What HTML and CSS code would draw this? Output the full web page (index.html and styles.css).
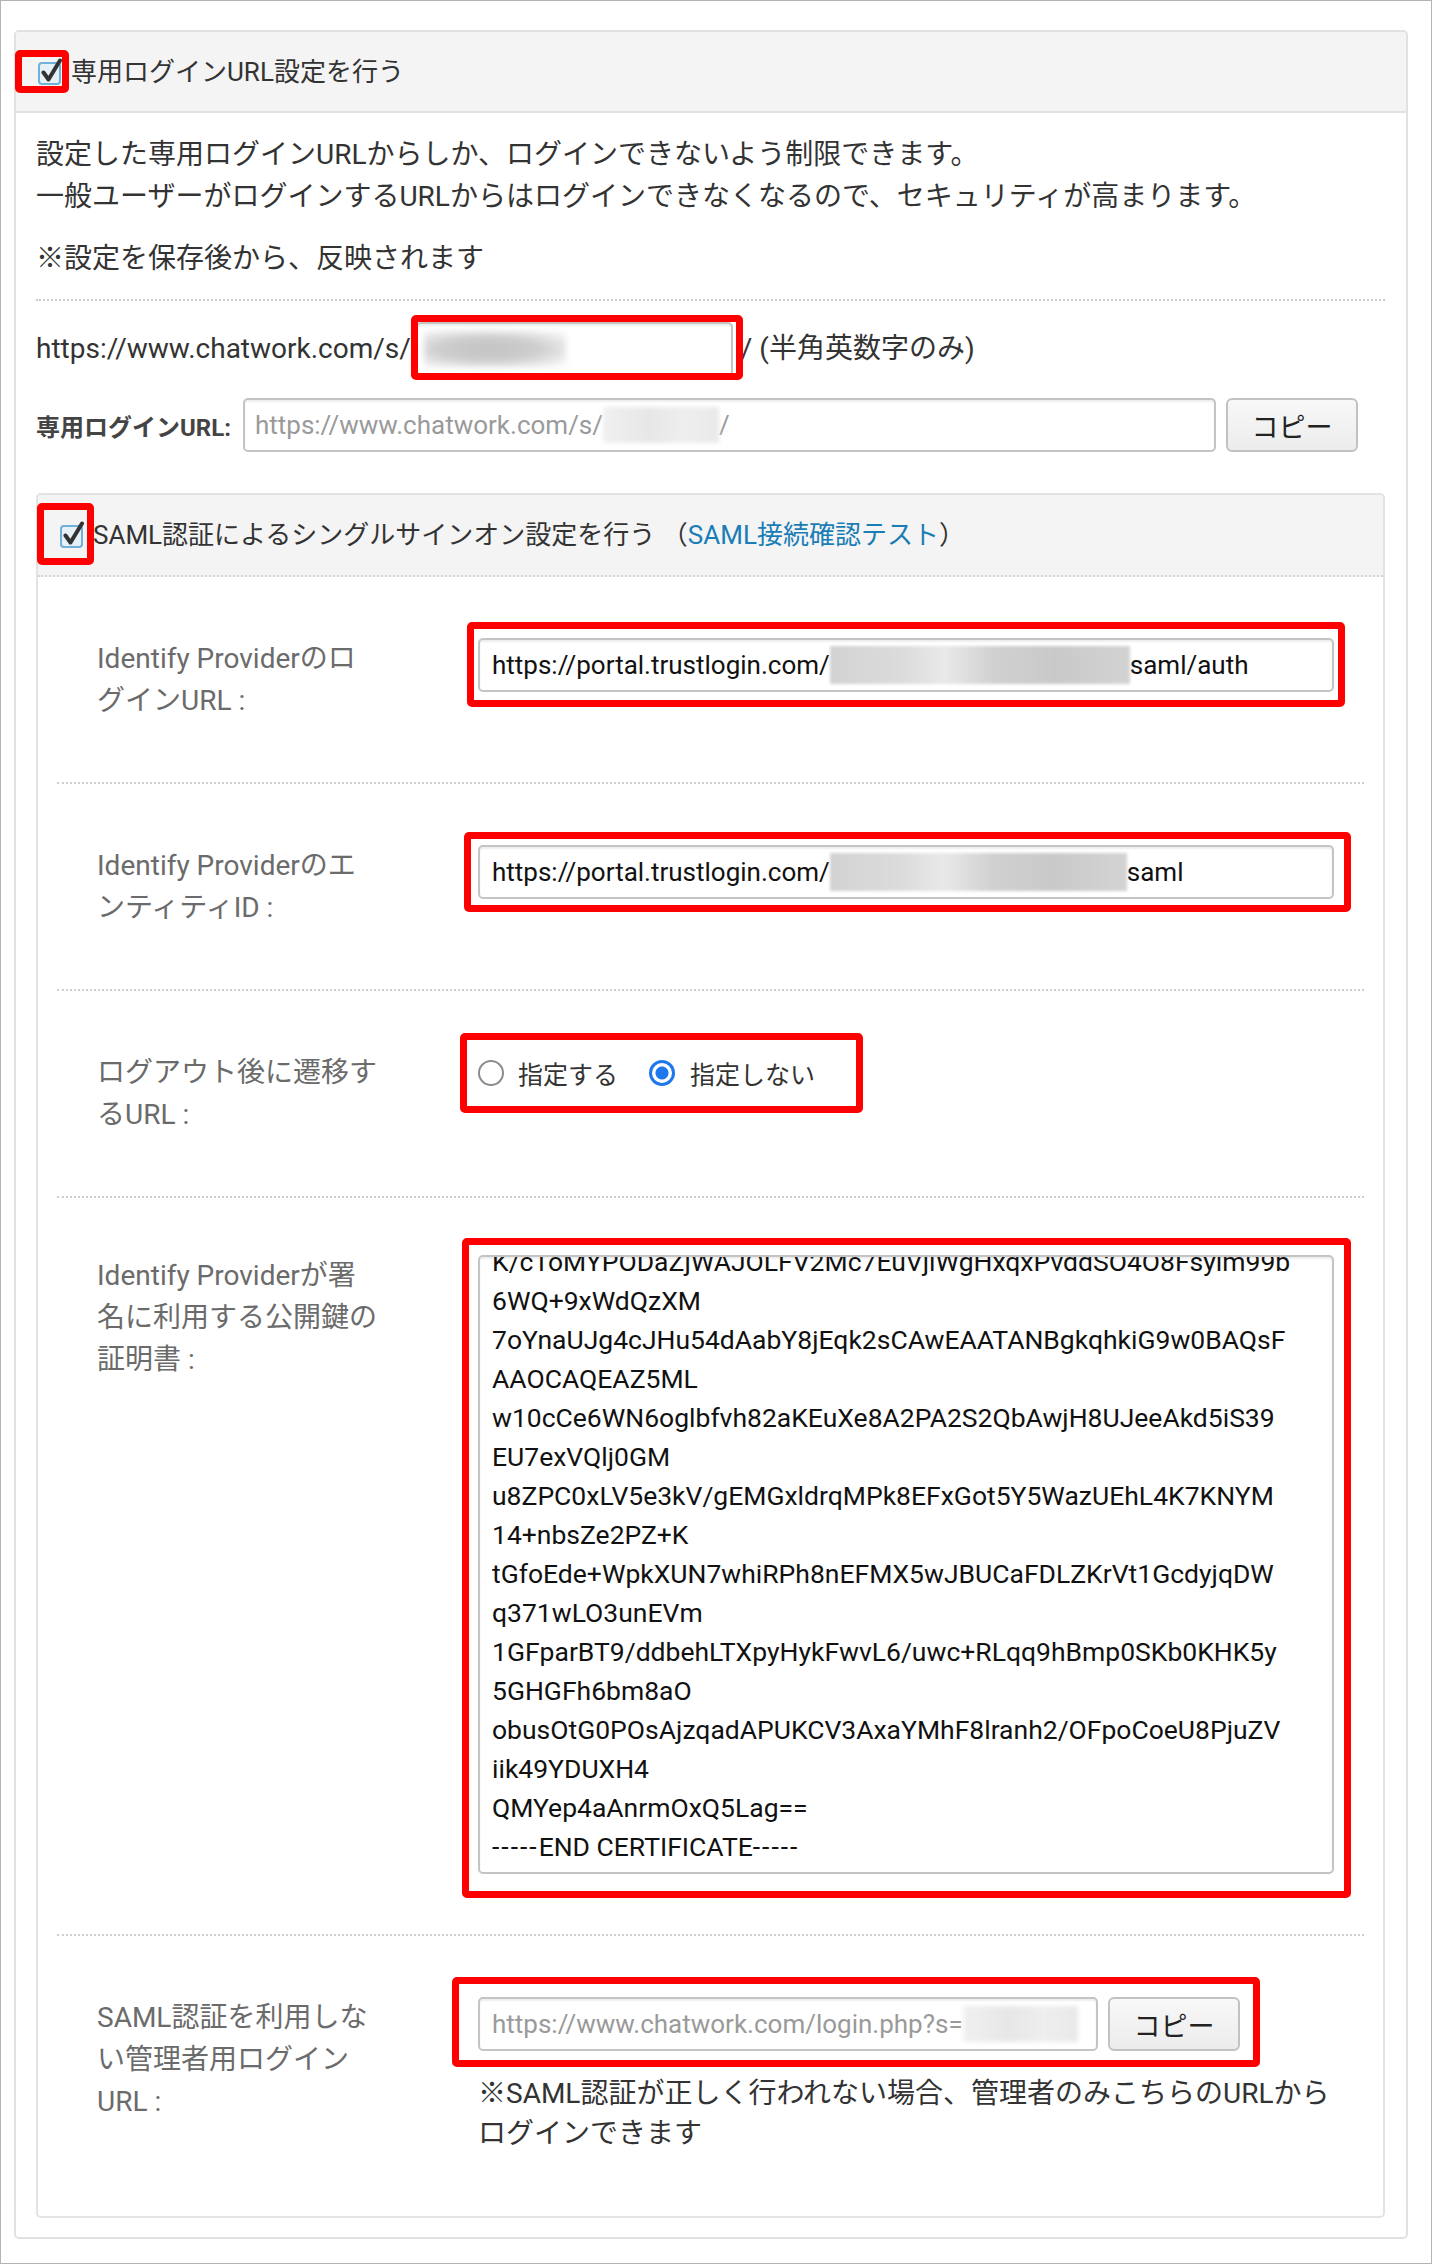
FILE: index.html
```
<html>
<head>
  <meta charset="utf-8">
  <title>専用ログインURL設定</title>
  <link rel="stylesheet" href="styles.css">
</head>
<body>

<div class="frame">
  <div class="panel">
    <div class="panel-head">
      <span class="mark mark-c1">
        <svg class="cb" viewBox="0 0 28 28" width="28" height="28">
          <rect x="3" y="5" width="21" height="21" rx="3" fill="#e6f0f7" stroke="#6fb1d9" stroke-width="2"/>
          <path d="M7.5 14.5 L12.5 21.5 L24 2.5" fill="none" stroke="#333" stroke-width="4" stroke-linecap="round" stroke-linejoin="round"/>
        </svg>
      </span>
      <span class="head-text">専用ログインURL設定を行う</span>
    </div>

    <div class="panel-body">
      <p class="desc">設定した専用ログインURLからしか、ログインできないよう制限できます。<br>一般ユーザーがログインするURLからはログインできなくなるので、セキュリティが高まります。</p>
      <p class="desc save-note">※設定を保存後から、反映されます</p>

      <div class="slug-row">
        <span>https://www.chatwork.com/s/</span>
        <div class="field slug mark mark-slug"><span class="blur blur-blob"></span></div>
        <span>/ (半角英数字のみ)</span>
      </div>

      <div class="url-row">
        <span class="url-label">専用ログインURL:</span>
        <div class="field muted">https://www.chatwork.com/s/<span class="blur blur-light w-slug"></span>/</div>
        <button class="copy-btn">コピー</button>
      </div>

      <!-- SAML -->
      <div class="saml">
        <div class="saml-head">
          <span class="mark mark-c2">
            <svg class="cb" viewBox="0 0 28 28" width="28" height="28">
              <rect x="3" y="5" width="21" height="21" rx="3" fill="#e6f0f7" stroke="#6fb1d9" stroke-width="2"/>
              <path d="M7.5 14.5 L12.5 21.5 L24 2.5" fill="none" stroke="#333" stroke-width="4" stroke-linecap="round" stroke-linejoin="round"/>
            </svg>
          </span>
          <span class="head-text">SAML認証によるシングルサインオン設定を行う （<a class="test-link" href="#">SAML接続確認テスト</a>）</span>
        </div>

        <div class="saml-body">
          <div class="saml-row">
            <div class="row-label">Identify Providerのロ<br>グインURL :</div>
            <div class="row-field">
              <div class="field mark mark-idp">https://portal.trustlogin.com/<span class="blur blur-band w-idp"></span>saml/auth</div>
            </div>
          </div>

          <div class="saml-row">
            <div class="row-label">Identify Providerのエ<br>ンティティID :</div>
            <div class="row-field">
              <div class="field mark mark-entity">https://portal.trustlogin.com/<span class="blur blur-band w-entity"></span>saml</div>
            </div>
          </div>

          <div class="saml-row">
            <div class="row-label">ログアウト後に遷移す<br>るURL :</div>
            <div class="row-field">
              <div class="radios mark mark-radio">
                <span class="radio"></span><span class="radio-text">指定する</span>
                <span class="radio on"></span><span class="radio-text">指定しない</span>
              </div>
            </div>
          </div>

          <div class="saml-row cert-row">
            <div class="row-label">Identify Providerが署<br>名に利用する公開鍵の<br>証明書 :</div>
            <div class="row-field">
              <div class="cert mark mark-cert">
                <div class="cert-lines">K/cToMYPODaZjWAJOLFV2Mc7EuVjiWgHxqxPvddSO4O8Fsylm99b
6WQ+9xWdQzXM
7oYnaUJg4cJHu54dAabY8jEqk2sCAwEAATANBgkqhkiG9w0BAQsF
AAOCAQEAZ5ML
w10cCe6WN6oglbfvh82aKEuXe8A2PA2S2QbAwjH8UJeeAkd5iS39
EU7exVQlj0GM
u8ZPC0xLV5e3kV/gEMGxldrqMPk8EFxGot5Y5WazUEhL4K7KNYM
14+nbsZe2PZ+K
tGfoEde+WpkXUN7whiRPh8nEFMX5wJBUCaFDLZKrVt1GcdyjqDW
q371wLO3unEVm
1GFparBT9/ddbehLTXpyHykFwvL6/uwc+RLqq9hBmp0SKb0KHK5y
5GHGFh6bm8aO
obusOtG0POsAjzqadAPUKCV3AxaYMhF8lranh2/OFpoCoeU8PjuZV
iik49YDUXH4
QMYep4aAnrmOxQ5Lag==
<span class="dashes">-----</span>END CERTIFICATE<span class="dashes">-----</span></div>
              </div>
            </div>
          </div>

          <div class="saml-row">
            <div class="row-label">SAML認証を利用しな<br>い管理者用ログイン<br>URL :</div>
            <div class="row-field">
              <div class="admin-group mark mark-admin">
                <div class="field muted admin-field">https://www.chatwork.com/login.php?s=<span class="blur blur-light w-admin"></span></div>
                <button class="copy-btn">コピー</button>
              </div>
              <p class="admin-note">※SAML認証が正しく行われない場合、管理者のみこちらのURLから<br>ログインできます</p>
            </div>
          </div>
        </div>
      </div>
    </div>
  </div>
</div>

</body>
</html>
```

FILE: styles.css
```
body {
  margin: 0;
  font-family: Roboto, "Noto Sans CJK JP", sans-serif;
  color: #333;
  background: #fff;
}
.frame {
  width: 1432px;
  height: 2264px;
  box-sizing: border-box;
  border: 1px solid #b4b4b4;
  padding: 29px 23px 0 13px;
}
.panel {
  border: 2px solid #e1e1e1;
  border-radius: 5px;
}
.panel-head {
  height: 79px;
  background: #f4f4f4;
  border-bottom: 2px solid #e1e1e1;
  border-radius: 3px 3px 0 0;
  display: flex;
  align-items: center;
  gap: 7px;
  padding-left: 20px;
}
.head-text {
  font-size: 26px;
  line-height: 40px;
  color: #333;
}
.cb {
  display: block;
}
.panel-body {
  padding: 21px 21px 19px 20px;
}
.desc {
  margin: 0;
  font-size: 28px;
  line-height: 42px;
}
.save-note {
  margin: 20px 0 19px;
}

/* top rows */
.slug-row {
  border-top: 2px dotted #c9c9c9;
  padding-top: 21px;
  display: flex;
  align-items: center;
  font-size: 28px;
  line-height: 42px;
}
.url-row {
  margin-top: 22px;
  padding-right: 27px;
  display: flex;
  align-items: center;
}
.url-label {
  font-size: 24px;
  font-weight: bold;
  color: #444;
  margin-right: 12px;
  white-space: nowrap;
}

/* inputs */
.field {
  height: 54px;
  box-sizing: border-box;
  border: 2px solid #c4c4c4;
  border-radius: 5px;
  box-shadow: inset 0 2px 2px rgba(0,0,0,0.07);
  background: #fff;
  padding: 0 12px;
  display: flex;
  align-items: center;
  font-size: 26px;
  color: #111;
  white-space: nowrap;
}
.field.slug {
  width: 317px;
  flex: none;
  padding: 0 6px;
  margin: 0 8px 0 5px;
}
.url-row .field {
  flex: 1;
  padding-left: 10px;
}
.field.muted {
  color: #9a9a9a;
}
.copy-btn {
  width: 132px;
  height: 54px;
  margin-left: 10px;
  flex: none;
  border: 2px solid #c2c2c2;
  border-radius: 6px;
  background: linear-gradient(#f8f8f8, #ececec);
  font-family: inherit;
  font-size: 27px;
  color: #222;
  padding: 0;
}

/* redacted parts */
.blur {
  display: inline-block;
  height: 38px;
  flex: none;
}
.blur-blob {
  width: 142px;
  height: 36px;
  background: radial-gradient(ellipse at 45% 50%, #c3c3c3 0%, #cdcdcd 45%, #f2f2f2 85%, #fff 100%);
  filter: blur(3px);
}
.blur-light {
  height: 36px;
  background: linear-gradient(90deg, #f0f0f0, #e7e7e7 40%, #eeeeee 70%, #e9e9e9);
  filter: blur(2px);
}
.blur-band {
  background: linear-gradient(90deg, #d2d2d2, #dcdcdc 25%, #e9e9e9 38%, #d0d0d0 55%, #c9c9c9 75%, #d3d3d3);
  filter: blur(1.5px);
}
.w-slug { width: 116px; }
.w-admin { width: 115px; }
.w-idp { width: 300px; }
.w-entity { width: 297px; }

/* SAML panel */
.saml {
  margin-top: 41px;
  border: 2px solid #e3e3e3;
  border-radius: 5px;
}
.saml-head {
  height: 80px;
  background: #f4f4f4;
  border-bottom: 2px dotted #d4d4d4;
  border-radius: 3px 3px 0 0;
  display: flex;
  align-items: center;
  gap: 7px;
  padding-left: 20px;
}
.test-link {
  color: #1a7db5;
  text-decoration: none;
}
.saml-body {
  padding: 0 19px;
}
.saml-row {
  display: flex;
  align-items: flex-start;
  padding: 61px 30px 60px 40px;
  border-bottom: 2px dotted #cfcfcf;
}
.saml-row:last-child {
  border-bottom: none;
  padding-bottom: 62px;
}
.saml-row.cert-row {
  padding-top: 57px;
}
.row-label {
  flex: 0 0 381px;
  font-size: 28px;
  line-height: 42px;
  color: #6b6b6b;
}
.row-field {
  flex: 1;
  min-width: 0;
}

/* radios */
.radios {
  display: inline-flex;
  align-items: center;
  height: 42px;
  font-size: 25px;
  color: #333;
}
.radio {
  width: 26px;
  height: 26px;
  box-sizing: border-box;
  border-radius: 50%;
  border: 2px solid #8c8c8c;
  background: #fff;
  margin-right: 14px;
}
.radio.on {
  border: 3px solid #1f77ee;
  background: radial-gradient(circle, #1f77ee 0 6px, #fff 7px);
  margin-left: 31px;
  margin-right: 15px;
}

/* certificate (scrolled textarea look) */
.cert {
  height: 619px;
  box-sizing: border-box;
  border: 2px solid #c4c4c4;
  border-radius: 5px;
  box-shadow: inset 0 2px 2px rgba(0,0,0,0.07);
  padding: 0 12px;
}
.cert-lines {
  white-space: pre;
  overflow: hidden;
  font-size: 26.5px;
  line-height: 39px;
  color: #111;
  margin-top: -15px;
  height: 630px;
  clip-path: inset(15px 0 0 0);
}
.dashes {
  letter-spacing: 2px;
}

/* admin url */
.admin-group {
  display: flex;
  width: 762px;
}
.admin-field {
  flex: 1;
  overflow: hidden;
}
.admin-note {
  margin: 23px 0 0;
  font-size: 28px;
  line-height: 40px;
  color: #333;
}

/* red annotation boxes */
.mark {
  position: relative;
}
.mark::after {
  content: "";
  position: absolute;
  border: 7px solid #ff0000;
  border-radius: 5px;
  pointer-events: none;
}
.mark-c1::after { top: -8px; right: -5px; bottom: -7px; left: -21px; }
.mark-c2::after { top: -18px; right: -8px; bottom: -16px; left: -21px; }
.mark-slug::after { top: -9px; right: -12px; bottom: -6px; left: -7px; }
.mark-idp::after { top: -18px; right: -13px; bottom: -17px; left: -13px; }
.mark-entity::after { top: -15px; right: -19px; bottom: -15px; left: -16px; }
.mark-radio::after { top: -19px; right: -48px; bottom: -19px; left: -18px; }
.mark-cert::after { top: -19px; right: -19px; bottom: -26px; left: -18px; }
.mark-admin::after { top: -20px; right: -20px; bottom: -16px; left: -26px; }
```
